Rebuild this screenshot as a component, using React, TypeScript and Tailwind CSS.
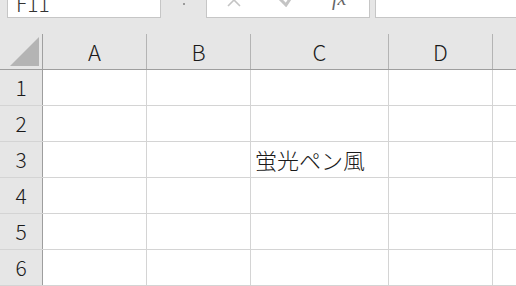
import React from 'react';

const cols = [
  { name: 'A', w: 'w-[104px]' },
  { name: 'B', w: 'w-[104px]' },
  { name: 'C', w: 'w-[138px]' },
  { name: 'D', w: 'w-[104px]' },
  { name: '', w: 'flex-1' },
];

const rows = [1, 2, 3, 4, 5, 6];

const font = { fontFamily: '"Noto Sans CJK JP", "Noto Sans", sans-serif' };

export default function App() {
  return (
    <div className="w-[516px] h-[286px] overflow-hidden bg-[#e6e6e6] text-[#1a1a1a] font-light" style={font}>
      {/* formula bar */}
      <div className="flex h-[34px] items-start">
        <div className="ml-[7px] w-[154px] h-[18px] bg-white border border-t-0 border-[#c6c6c6] overflow-hidden">
          <div className="mt-[-9px] pl-[8px] text-[21px] leading-[24px] text-[#333]">F11</div>
        </div>
        <div className="w-[45px] flex justify-center pt-[3px]">
          <div className="w-[2px] h-[2px] bg-[#9a9a9a]" />
        </div>
        <div className="w-[164px] h-[18px] bg-white border border-t-0 border-[#c6c6c6] overflow-hidden flex items-start">
          <svg className="ml-[19px] mt-[-8px]" width="16" height="16" viewBox="0 0 16 16">
            <path d="M2 2 L14 14 M14 2 L2 14" stroke="#c4c4c4" strokeWidth="1.6" fill="none" />
          </svg>
          <svg className="ml-[36px] mt-[-9px]" width="18" height="16" viewBox="0 0 18 16">
            <path d="M2 8 L8 14 L16 2" stroke="#c4c4c4" strokeWidth="3" fill="none" />
          </svg>
          <div className="ml-[36px] mt-[-12px] text-[20px] leading-[20px] italic text-[#666]" style={{ fontFamily: '"Liberation Serif", serif' }}>
            fx
          </div>
        </div>
        <div className="ml-[5px] flex-1 h-[18px] bg-white border border-t-0 border-r-0 border-[#c6c6c6]" />
      </div>

      {/* column headers */}
      <div className="flex h-[36px] border-b border-[#9e9e9e]">
        <div className="w-[43px] border-r border-[#a0a0a0] flex items-end justify-end pr-[3px] pb-[3px]">
          <svg width="29" height="29" viewBox="0 0 29 29">
            <polygon points="0,29 29,29 29,0" fill="#b4b4b4" />
          </svg>
        </div>
        {cols.map((c, i) => (
          <div
            key={i}
            className={`${c.w} shrink-0 flex items-center justify-center text-[22px] ${c.name ? 'border-r border-[#b4b4b4]' : ''}`}
          >
            {c.name}
          </div>
        ))}
      </div>

      {/* grid */}
      {rows.map((r) => (
        <div key={r} className="flex h-[36px] border-b border-[#d4d4d4]">
          <div className="w-[43px] shrink-0 border-r border-[#9e9e9e] flex items-center justify-center text-[21px]">
            {r}
          </div>
          {cols.map((c, i) => (
            <div
              key={i}
              className={`${c.w} shrink-0 bg-white flex items-center ${c.name ? 'border-r border-[#d4d4d4]' : ''}`}
            >
              {r === 3 && c.name === 'C' ? (
                <span className="pl-[4px] text-[22px] whitespace-nowrap">蛍光ペン風</span>
              ) : null}
            </div>
          ))}
        </div>
      ))}
    </div>
  );
}
